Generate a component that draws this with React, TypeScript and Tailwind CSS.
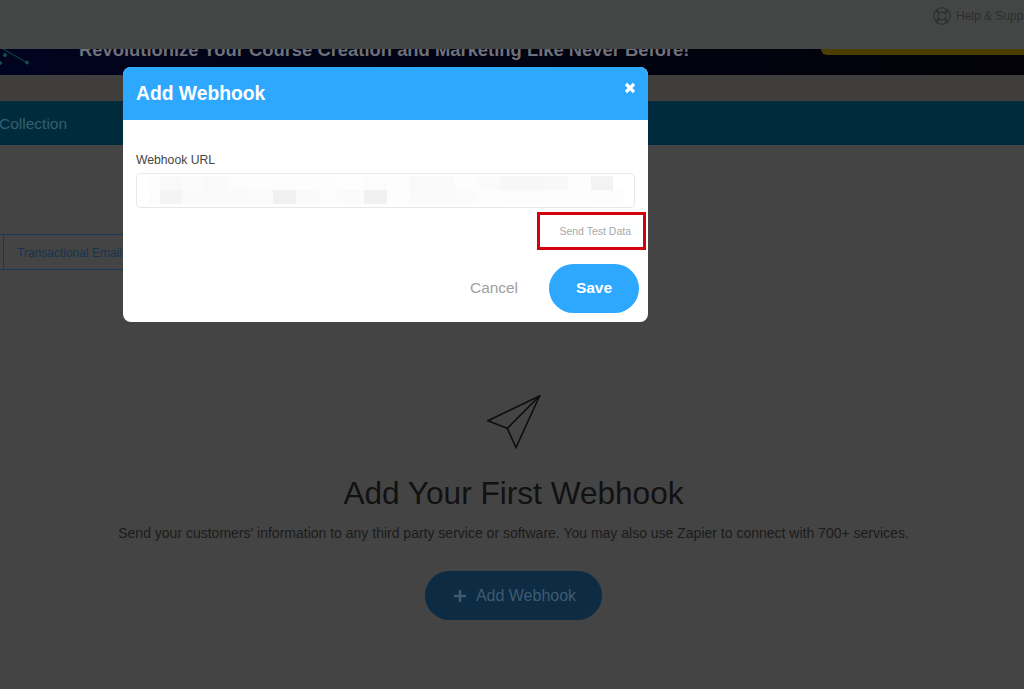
import { FaPlus } from 'react-icons/fa';

// pixelated (redacted) url, two rows of grey cells
const BLUR_ROWS = [
    ['#fdfdfd', '#f9f9f9', '#fbfbfb', '#f9f9f9', '#fcfcfc', '#fdfdfd', '#fdfdfd', '#fdfdfd', '#fdfdfd', '#fefefe', '#fcfcfc', '#fdfdfd', '#f9f9f9', '#fafafa', '#fdfdfd', '#fbfbfb', '#f7f7f7', '#f7f7f7', '#f8f8f8', '#fdfdfd', '#f3f3f3', '#ffffff'],
    ['#fcfcfc', '#f4f4f4', '#fafafa', '#fafafa', '#fafafa', '#fbfbfb', '#f1f1f1', '#fafafa', '#fcfcfc', '#fbfbfb', '#f1f1f1', '#fdfdfd', '#fafafa', '#fafafa', '#fbfbfb', '#fdfdfd', '#fcfcfc', '#fcfcfc', '#fdfdfd', '#fdfdfd', '#fcfcfc', '#fdfdfd'],
];

function PaperPlane() {
    return (
        <svg width="54" height="54" viewBox="0 0 54 54" fill="none" stroke="#0d0d0d" strokeWidth="1.6" strokeLinejoin="miter">
            <path d="M52.5 1 L1 25.7 L20.3 33.3 L29 52.5 Z" />
            <path d="M52.5 1 L20.3 33.3" />
        </svg>
    );
}

function HelpRing() {
    return (
        <svg width="18" height="18" viewBox="0 0 18 18" fill="none" stroke="#2c2e2e" strokeWidth="1.1" className="shrink-0">
            <circle cx="9" cy="9" r="8.3" />
            <circle cx="9" cy="9" r="3.8" />
            <path d="M3.6 2.6 L6.6 5.6 M2.6 3.6 L5.6 6.6 M14.4 2.6 L11.4 5.6 M15.4 3.6 L12.4 6.6 M3.6 15.4 L6.6 12.4 M2.6 14.4 L5.6 11.4 M14.4 15.4 L11.4 12.4 M15.4 14.4 L12.4 11.4" />
        </svg>
    );
}

export default function App() {
    return (
        <div className="relative h-[689px] w-[1024px] overflow-hidden bg-[#444444] font-['Liberation_Sans',Arial,sans-serif]">
            <header className="relative z-10 flex h-[49px] items-start justify-end bg-[#444645] pt-[7px] whitespace-nowrap">
                <div className="flex w-[91px] items-center gap-[5px] overflow-hidden text-xs text-[#2c2e2e]">
                    <HelpRing />
                    <span>Help &amp; Support</span>
                </div>
            </header>

            <div className="relative flex h-[26px] overflow-hidden bg-gradient-to-r from-[#01041f] to-[#020208] whitespace-nowrap">
                <svg width="32" height="26" viewBox="0 0 32 26" fill="none" stroke="#12504f" strokeWidth="1" className="shrink-0">
                    <path d="M3 0 L27 13.5" />
                    <circle cx="27" cy="13.5" r="1.5" fill="#12504f" />
                    <circle cx="5" cy="6" r="1.5" fill="#12504f" />
                    <circle cx="0" cy="14" r="1.5" fill="#12504f" />
                </svg>
                <span className="mt-[-10px] ml-[47px] text-[18.4px] leading-[21px] font-bold text-[#6f7078]">
                    Revolutionize Your Course Creation and Marketing Like Never Before!
                </span>
                <div className="ml-auto h-[6px] w-[203px] rounded-bl-[12px] bg-[#4a3e00]" />
            </div>

            <div className="h-[26px] bg-[#403e3d]" />

            <nav className="flex h-[44px] items-center bg-[#002b3d] pt-px text-[15.5px] text-[#33606f]">
                <span className="-ml-px">Collection</span>
            </nav>

            <div className="mt-[89px] flex h-[36px]">
                <div className="w-[4px] border-y border-r border-[#17385a]" />
                <div className="flex w-[140px] items-center border-y border-r border-[#17385a] pt-px pl-[13px] text-xs text-[#16344f]">
                    Transactional Emails
                </div>
            </div>

            <main className="mt-[125px] flex flex-col items-center pl-[3px]">
                <PaperPlane />
                <h1 className="mt-[24px] text-[31.6px] leading-[40px] text-[#111111]">Add Your First Webhook</h1>
                <p className="mt-[10px] text-sm leading-5 text-[#1b1b1b]">
                    Send your customers' information to any third party service or software. You may also use Zapier to connect with 700+ services.
                </p>
                <button className="mt-[28px] flex h-[49px] w-[177px] items-center justify-center gap-[9px] rounded-full bg-[#0d2b42] pl-[2px] text-base text-[#3f5b73]">
                    <FaPlus size={14} />
                    Add Webhook
                </button>
            </main>

            {/* modal */}
            <div className="absolute top-[67px] left-[123px] z-20 w-[525px] overflow-hidden rounded-lg bg-white">
                <div className="flex h-[53px] items-center justify-between bg-[#2ea8ff] pr-3 pl-[13px] text-white">
                    <h2 className="mt-px text-[19.3px] font-bold">Add Webhook</h2>
                    <svg width="12" height="12" viewBox="0 0 12 12" stroke="currentColor" strokeWidth="3.2" className="mb-[11px]">
                        <path d="M2 2 L10 10 M10 2 L2 10" />
                    </svg>
                </div>
                <div className="h-[202px] px-[13px] pt-[33px]">
                    <label className="block text-[12.2px] leading-[15px] text-[#444444]">Webhook URL</label>
                    <div className="mt-[5px] h-[35px] w-[499px] rounded border border-[#e8e8e8] py-[2px] pl-[12px]">
                        {BLUR_ROWS.map((row, i) => (
                            <div key={i} className="flex h-[14px]">
                                {row.map((color, j) => (
                                    <div
                                        key={j}
                                        className={j === 0 || j === 21 ? 'h-full w-[10.7px]' : 'h-full w-[22.7px]'}
                                        style={{ backgroundColor: color }}
                                    />
                                ))}
                            </div>
                        ))}
                    </div>
                    <div className="mt-1 flex justify-end">
                        <div className="-mr-[11px] flex h-[38px] w-[109px] items-center justify-end border-[3px] border-[#d7000f] pt-[2px] pr-3 text-[10.5px] text-[#a8a8a8]">
                            Send Test Data
                        </div>
                    </div>
                    <div className="mt-[14px] flex items-center justify-end gap-[31px]">
                        <span className="mb-[2px] text-[15.4px] text-[#a0a0a0]">Cancel</span>
                        <button className="-mr-1 h-[49px] w-[90px] rounded-full bg-[#2ea8ff] pb-[2px] text-[15.5px] font-bold text-white">Save</button>
                    </div>
                </div>
            </div>
        </div>
    );
}
